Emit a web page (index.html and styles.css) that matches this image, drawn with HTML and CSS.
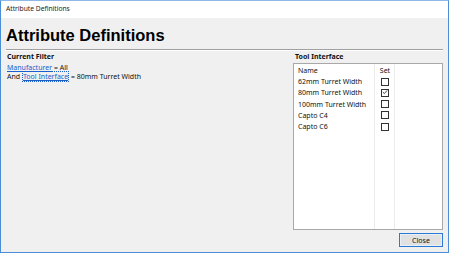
FILE: index.html
```html
<!DOCTYPE html>
<html>
<head>
<meta charset="utf-8">
<link rel="stylesheet" href="styles.css">
</head>
<body>
<div class="window">
  <div class="titlebar">Attribute Definitions</div>
  <div class="content">
    <h1 class="heading">Attribute Definitions</h1>
    <div class="rule"></div>
    <div class="main">
      <div class="filter">
        <div class="label first">Current Filter</div>
        <div class="line"><a class="link">Manufacturer</a> = All</div>
        <div class="line">And <a class="link focus">Tool Interface</a> = 80mm Turret Width</div>
      </div>
      <div class="side">
        <div class="label">Tool Interface</div>
        <div class="list">
          <div class="cols">
            <div class="col name"></div>
            <div class="col set"></div>
            <div class="col rest"></div>
          </div>
          <div class="rows">
            <div class="row head"><span class="c-name">Name</span><span class="c-set">Set</span></div>
            <div class="row"><span class="c-name">62mm Turret Width</span><span class="c-set"><span class="box"></span></span></div>
            <div class="row"><span class="c-name">80mm Turret Width</span><span class="c-set"><span class="box checked"><svg viewBox="0 0 9 9" width="9" height="9"><path d="M2 4.5 L3.8 6.3 L7 2.6" fill="none" stroke="#333" stroke-width="1"/></svg></span></span></div>
            <div class="row"><span class="c-name">100mm Turret Width</span><span class="c-set"><span class="box"></span></span></div>
            <div class="row"><span class="c-name">Capto C4</span><span class="c-set"><span class="box"></span></span></div>
            <div class="row"><span class="c-name">Capto C6</span><span class="c-set"><span class="box"></span></span></div>
          </div>
        </div>
        <div class="buttons"><button class="btn">Close</button></div>
      </div>
    </div>
  </div>
</div>
</body>
</html>
```
FILE: styles.css
```css
html, body {
  margin: 0;
  padding: 0;
}
body {
  width: 449px;
  height: 253px;
  overflow: hidden;
  font-family: "Noto Sans", "Open Sans", sans-serif;
  font-size: 7px;
  color: #111;
}
.window {
  box-sizing: border-box;
  width: 449px;
  height: 253px;
  border: 1px solid #4a8fd6;
  border-top-color: #8fb8e6;
  display: flex;
  flex-direction: column;
  background: #f0f0f0;
}
.titlebar {
  height: 17px;
  background: #fff;
  padding-left: 5px;
  line-height: 16px;
  font-size: 6.7px;
  color: #222;
}
.content {
  flex: 1;
  display: flex;
  flex-direction: column;
  padding: 6px 5px 5px 5px;
  min-height: 0;
}
.heading {
  margin: 0;
  font-family: "Liberation Sans", Arial, sans-serif;
  font-weight: bold;
  font-size: 16.5px;
  line-height: 22px;
  color: #000;
}
.rule {
  height: 1px;
  background: #a0a0a0;
  margin-top: 3px;
  border-bottom: 1px solid #fff;
}
.main {
  flex: 1;
  display: flex;
  min-height: 0;
  margin-top: 1px;
}
.filter {
  flex: 1;
}
.label {
  font-weight: bold;
  line-height: 10px;
  padding-left: 1px;
}
.label.first {
  margin-bottom: 1px;
}
.line {
  line-height: 9.3px;
  padding-left: 1px;
}
.link {
  color: #1a5fcc;
  text-decoration: underline;
}
.link.focus {
  outline: 1px dotted #1a5fcc;
  outline-offset: 0;
  margin-left: 1px;
  margin-right: 1px;
}
.side {
  width: 150px;
  display: flex;
  flex-direction: column;
}
.side .label {
  padding-left: 2px;
}
.list {
  position: relative;
  flex: 1;
  background: #fff;
  border: 1px solid #a8a8a8;
  margin-top: 1px;
}
.cols {
  position: absolute;
  inset: 0;
  display: flex;
}
.col {
  border-right: 1px solid #ececec;
}
.col.name { width: 80px; }
.col.set { width: 19px; }
.col.rest { flex: 1; border-right: 0; }
.rows {
  position: relative;
  padding-top: 1px;
}
.row {
  display: flex;
  height: 11.2px;
  align-items: center;
}
.c-name {
  width: 81px;
  padding-left: 4px;
  box-sizing: border-box;
}
.c-set {
  width: 20px;
  display: flex;
  justify-content: center;
}
.box {
  box-sizing: border-box;
  width: 8px;
  height: 8px;
  border: 1px solid #333;
  background: #fff;
  display: flex;
}
.box svg {
  margin: -1.5px;
  width: 8px;
  height: 8px;
}
.buttons {
  display: flex;
  justify-content: flex-end;
  padding-top: 3px;
}
.btn {
  width: 44px;
  height: 14px;
  padding: 0;
  font-family: "Noto Sans", "Open Sans", sans-serif;
  font-size: 7px;
  color: #111;
  background: #e1e1e1;
  border: 1px solid #2a7ad5;
  box-shadow: inset 0 0 0 1px #e8f0f8;
}
```
